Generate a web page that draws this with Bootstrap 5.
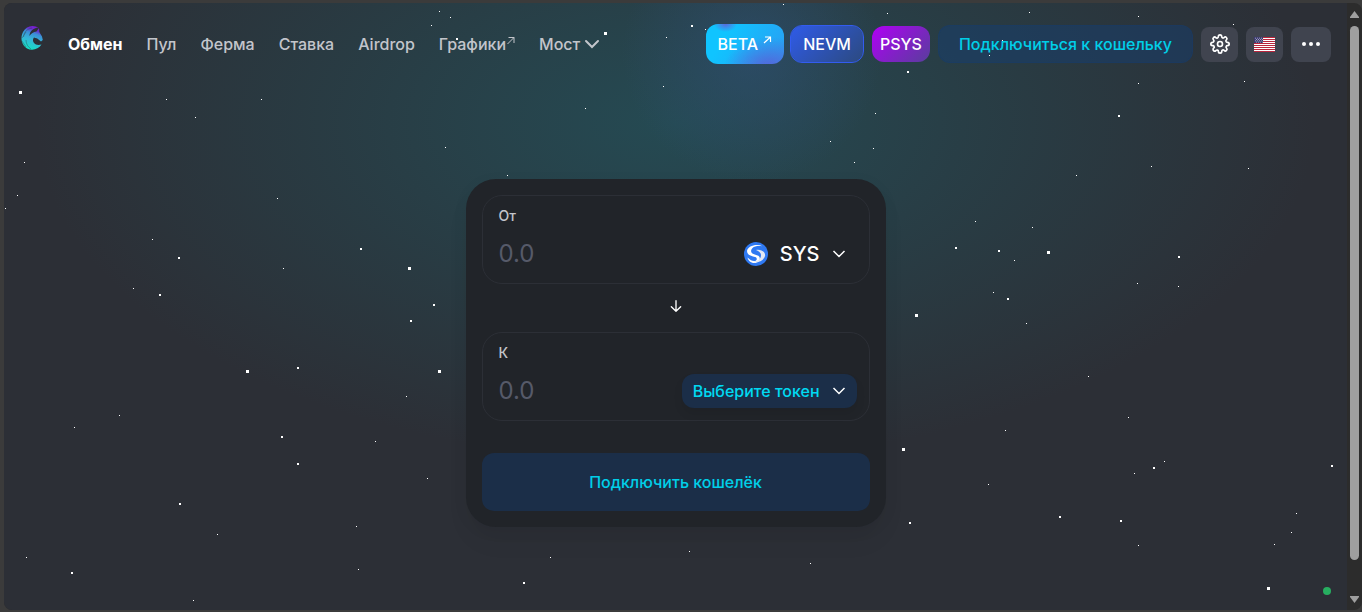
<!DOCTYPE html>
<html lang="ru">
<head>
<meta charset="utf-8">
<meta name="viewport" content="width=device-width, initial-scale=1">
<title>Обмен</title>
<link href="https://cdn.jsdelivr.net/npm/bootstrap@5.3.0/dist/css/bootstrap.min.css" rel="stylesheet">
<style>
  body { background: #3b3b3b; font-family: Inter, "Liberation Sans", sans-serif; font-size: 16px; line-height: 24px; color: #fff; }
  .frame { min-height: 100vh; padding: 3px 0 2px 4px; }
  .window { border-radius: 8px; background: #2c2c2c; overflow: hidden; }
  .page {
    background:
      radial-gradient(circle at 748px 50px, rgba(48, 80, 120, .55), rgba(48, 80, 120, 0) 130px),
      radial-gradient(ellipse 640px 340px at 50% 120px, rgba(36, 78, 87, .88), rgba(36, 78, 87, 0)),
      #2c2f36;
  }
  .stars { left: 0; top: 0; pointer-events: none; }
  .topbar { padding: 18px 16px 16px; min-height: 80px; gap: 8px; }
  .menu { gap: 24px; font-weight: 500; }
  .menu a { color: #c3c5cb; text-decoration: none; white-space: nowrap; }
  .menu a.current { color: #fff; font-weight: 700; }
  .brand { margin-right: 16px; }
  .pill { border: 0; border-radius: 12px; font-weight: 500; color: #fff; padding: 0 8px; height: 36px; white-space: nowrap; }
  .pill-beta { height: 40px; padding: 0 12px; background: radial-gradient(ellipse at 80% 110%, rgba(91, 92, 214, .9), rgba(91, 92, 214, 0) 50%), radial-gradient(ellipse at 25% 0, #5b68dc, rgba(91, 104, 220, 0) 14%), linear-gradient(120deg, #10c4ff 25%, #2a9df2); margin-right: -2px; }
  .pill-nevm { height: 38px; padding: 0 12px; border: 1px solid #335cf0; background: linear-gradient(135deg, #2f5be8, #2c4a80) padding-box; }
  .pill-psys { background: linear-gradient(135deg, #b000f5, #583e9c); }
  .pill-connect { height: 38px; padding: 0 20px; background: rgba(21, 61, 111, .5); color: #00cfe8; border: 1px solid rgba(21, 61, 111, .3); }
  .tool { border: 0; border-radius: 8px; background: #40444f; height: 35px; width: 37px; padding: 0; }
  .tool-wide { width: 40px; }
  .swap { width: 420px; max-width: 100%; border-radius: 30px; background: #212429; padding: 16px; box-shadow: 0 4px 16px rgba(0, 0, 0, .05), 0 16px 24px rgba(0, 0, 0, .04); }
  .token-panel { border: 1px solid #2c2f36; border-radius: 20px; height: 89px; padding: 12px 12px 12px 16px; }
  .token-panel label { font-size: 14px; line-height: 16px; font-weight: 500; color: #c3c5cb; }
  .amount { font-size: 24px; line-height: 32px; width: 0; background: none; border: 0; padding: 0; color: #fff; outline: 0; }
  .amount::placeholder { color: #565a69; opacity: 1; }
  .token { border: 0; border-radius: 12px; height: 34px; padding: 0 11px; background: none; color: #fff; font-size: 20px; font-weight: 500; }
  .token-empty { background: #1b2e48; color: #00d9f2; font-size: 16px; box-shadow: 0 6px 10px rgba(0, 0, 0, .08); }
  .flip { height: 48px; padding: 0 0 4px; background: none; border: 0; }
  .connect-wide { height: 58px; border: 0; border-radius: 12px; background: #1b2e48; color: #00cfe8; font-weight: 500; margin-top: 32px; }
  .rail { width: 15px; padding: 8px 0 6px; }
  .thumb { width: 9px; border-radius: 5px; background: #9f9f9f; margin: 7px 0 36px; }
  .status { right: 16px; bottom: 15px; width: 8px; height: 8px; background: #27ae60; }
</style>
</head>
<body>
<div class="frame d-flex">
  <div class="window d-flex flex-grow-1">
    <div class="page position-relative flex-grow-1 d-flex flex-column">
      <header class="topbar d-flex align-items-center">
        <a class="brand d-flex align-self-start" href="#" aria-label="Главная">
          <svg width="24" height="38" viewBox="0 2 24 38">
            <defs><linearGradient id="mane" x1="0.6" y1="0" x2="0.3" y2="1"><stop offset="0" stop-color="#7c19d8"/><stop offset=".14" stop-color="#6a2ccc"/><stop offset=".3" stop-color="#3b8fd6"/><stop offset=".55" stop-color="#35b4d8"/><stop offset="1" stop-color="#13e3c2"/></linearGradient></defs>
            <path fill="url(#mane)" d="M18.500 8.500C12.500 5.500 6 7 3 13 0 19 1.500 26 7 29.500c5 2.500 11.500 1 14.500-4-3 1-6 .5-7.500-1.500s-1.300-4 0-5.500c2 .5 3.500 1 4.500 2l2.500 2 1.800-1.500-.8-3.500-2.700-4.500-.3-4-2.500 3.500C13.500 13 11 14.500 9.500 17c0-4.500 3.500-8 9-8.500z"/>
            <path fill="none" stroke="#2c3039" stroke-width=".5" opacity=".7" d="M12 9C7 10 4 13 3.500 18M6 13l-4 6M2 22l4 6M6 21c0 4 2 7 5 9"/>
          </svg>
        </a>
        <nav class="menu d-flex align-items-center me-auto">
          <a class="current" href="#">Обмен</a>
          <a href="#">Пул</a>
          <a href="#">Ферма</a>
          <a href="#">Ставка</a>
          <a href="#">Airdrop</a>
          <a class="d-flex" href="#">Графики<svg class="mt-1" width="9" height="9" viewBox="0 0 9 9" fill="none" stroke="currentColor"><path d="M2.500 1.500H8V7M8 1.500L1.500 8"/></svg></a>
          <a class="d-flex align-items-center gap-1" href="#">Мост<svg width="16" height="10" viewBox="0 0 16 10" fill="none" stroke="currentColor" stroke-width="2" stroke-linecap="round"><path d="M2 2l6 6 6-6"/></svg></a>
        </nav>
        <button class="pill pill-beta d-flex align-items-center gap-1">BETA<svg class="mb-2" width="10" height="10" viewBox="0 0 10 10" fill="none" stroke="currentColor" stroke-width="1.200"><path d="M3 2h5.500v5M8.500 2L2 8"/></svg></button>
        <button class="pill pill-nevm">NEVM</button>
        <button class="pill pill-psys">PSYS</button>
        <button class="pill pill-connect">Подключиться к кошельку</button>
        <button class="tool d-flex align-items-center justify-content-center" aria-label="Настройки">
          <svg width="20" height="20" viewBox="0 0 24 24" fill="none" stroke="#fff" stroke-width="2"><circle cx="12" cy="12" r="3"/><path d="M19.400 15a1.650 1.650 0 0 0 .33 1.820l.06.06a2 2 0 0 1-2.830 2.830l-.06-.06a1.650 1.650 0 0 0-2.800 1.170V21a2 2 0 0 1-4 0v-.09a1.650 1.650 0 0 0-2.900-1.100l-.06.06a2 2 0 0 1-2.830-2.830l.06-.06A1.650 1.650 0 0 0 3.090 14H3a2 2 0 0 1 0-4h.09a1.650 1.650 0 0 0 1.180-2.800l-.06-.06a2 2 0 0 1 2.830-2.830l.06.06A1.650 1.650 0 0 0 10 3.170V3a2 2 0 0 1 4 0v.09a1.650 1.650 0 0 0 2.820 1.180l.06-.06a2 2 0 0 1 2.830 2.830l-.06.06A1.650 1.650 0 0 0 20.900 10H21a2 2 0 0 1 0 4h-.09a1.650 1.650 0 0 0-1.510 1z"/></svg>
        </button>
        <button class="tool d-flex align-items-center justify-content-center" aria-label="Язык">
          <svg width="21" height="15" viewBox="0 0 21 15"><path fill="#fff" d="M0 0h21v15H0z"/><path stroke="#b9253c" d="M0 .5h21M0 2.500h21M0 4.500h21M0 6.500h21M0 8.500h21M0 10.500h21M0 12.500h21M0 14.500h21"/><path fill="#3c3b6e" d="M0 0h9v6H0z"/><path stroke="#b9b9d4" stroke-width=".8" stroke-dasharray="1 1" d="M1 1.200h8M2 2.500h7M1 3.800h8M2 5.100h7"/></svg>
        </button>
        <button class="tool tool-wide d-flex align-items-center justify-content-center" aria-label="Ещё">
          <svg width="20" height="6" viewBox="0 0 20 6" fill="#fff"><circle cx="3" cy="3" r="2"/><circle cx="10" cy="3" r="2"/><circle cx="17" cy="3" r="2"/></svg>
        </button>
      </header>

      <svg class="stars position-absolute w-100 h-100" fill="none" stroke="#fff" aria-hidden="true">
        <path stroke-width="3" d="M15 89.500h3M600 30.500h3M404 265.500h3M911 312.500h3M242 368.500h3M434 368.500h3M898 446.500h3M1263 585.500h3M1043 249.500h3"/>
        <path stroke-width="2" d="M1114 113h2M687 23h2M903 69h2M174 255h2M356 246h2M155 292h2M429 302h2M406 318h2M293 365h2M277 434h2M293 461h2M175 501h2M67 570h2M519 580h2M905 520h2M1055 514h2M1116 518h2M1149 465h2M1327 463h2M1174 254h2M1003 296h2M951 245h2M994 248h2M452 36h2"/>
        <path stroke-width="1" d="M162 96.500h1M257 96.500h1M191 114.500h1M435 8.500h1M446 14.500h1M427 22.500h1M581 105.500h1M659 83.500h1M701 26.500h1M779 1.500h1M662 34.500h1M883 10.500h1M871 110.500h1M826 138.500h1M850 159.500h1M869 145.500h1M503 172.500h1M441 144.500h1M273 195.500h1M20 159.500h1M13 192.500h1M1 205.500h1M148 236.500h1M279 265.500h1M129 285.500h1M1025 9.500h1M1134 13.500h1M1229 21.500h1M1134 80.500h1M1240 78.500h1M1147 163.500h1M1244 165.500h1M1072 172.500h1M971 218.500h1M1028 224.500h1M1010 257.500h1M989 289.500h1M1133 280.500h1M1174 283.500h1M1022 320.500h1M1084 373.500h1M1001 427.500h1M1124 414.500h1M402 393.500h1M371 438.500h1M115 412.500h1M70 424.500h1M423 475.500h1M352 523.500h1M213 531.500h1M354 566.500h1M189 597.500h1M22 554.500h1M546 554.500h1M685 548.500h1M806 560.500h1M984 481.500h1M1130 470.500h1M1160 458.500h1M1134 542.500h1M1270 541.500h1M1287 529.500h1M1292 510.500h1M998 37.500h1M985 52.500h1"/>
      </svg>

      <main class="d-flex justify-content-center px-3 pb-5 pt-5">
        <section class="swap mt-5 position-relative">
          <div class="token-panel d-flex flex-column justify-content-between">
            <label for="from">От</label>
            <div class="d-flex align-items-center">
              <input class="amount flex-grow-1" id="from" type="text" inputmode="decimal" placeholder="0.0">
              <button class="token d-flex align-items-center">
                <svg class="me-2" width="24" height="24" viewBox="0 0 24 24"><circle cx="12" cy="12" r="12" fill="#2f79f2"/><path fill="#fff" d="M18.500 4.200C12 1.500 4 4 3 9c0 4 4 5 8 6 3 1 2 4-1 4-2 0-4-1-6.500-3.500 1 4 4 5.500 7 5.500 4 0 6-3 5-6-1-2-4-2-6-3-3-1-3-4-1-6 2-2 5.500-2.300 10-1.800z"/><path fill="#e3e8f2" d="M12 8c5-1 10 2 9 6-1 4-6 7-12 6 5-1 8-3 8-7 0-2-2-4-5-5z"/></svg>
                <span class="ms-1 me-2">SYS</span>
                <svg class="ms-1" width="14" height="8" viewBox="0 0 14 8" fill="none" stroke="#fff" stroke-width="1.500"><path d="M1.500 1l5.500 5.500L12.500 1"/></svg>
              </button>
            </div>
          </div>
          <button class="flip w-100 d-flex align-items-center justify-content-center" aria-label="Поменять местами">
            <svg width="16" height="16" viewBox="0 0 24 24" fill="none" stroke="#fff" stroke-width="2" stroke-linecap="round" stroke-linejoin="round"><path d="M12 4v16M19 13l-7 7-7-7"/></svg>
          </button>
          <div class="token-panel d-flex flex-column justify-content-between">
            <label for="to">К</label>
            <div class="d-flex align-items-center">
              <input class="amount flex-grow-1" id="to" type="text" inputmode="decimal" placeholder="0.0">
              <button class="token token-empty d-flex align-items-center">
                <span class="me-2">Выберите токен</span>
                <svg class="ms-1" width="14" height="8" viewBox="0 0 14 8" fill="none" stroke="#fff" stroke-width="1.500"><path d="M1.500 1l5.500 5.500L12.500 1"/></svg>
              </button>
            </div>
          </div>
          <button class="connect-wide w-100 d-block">Подключить кошелёк</button>
        </section>
      </main>
      <span class="status position-absolute rounded-circle"></span>
    </div>
    <div class="rail d-flex flex-column align-items-center flex-shrink-0" aria-hidden="true">
      <svg width="9" height="8" viewBox="0 0 9 8" fill="#9f9f9f"><path d="M4.500 0L9 6v1H0V6z"/></svg>
      <div class="thumb flex-grow-1"></div>
      <svg width="9" height="8" viewBox="0 0 9 8" fill="#9f9f9f"><path d="M4.500 7L9 1V0H0v1z"/></svg>
    </div>
  </div>
</div>
<script src="https://cdn.jsdelivr.net/npm/bootstrap@5.3.0/dist/js/bootstrap.bundle.min.js"></script>
</body>
</html>
